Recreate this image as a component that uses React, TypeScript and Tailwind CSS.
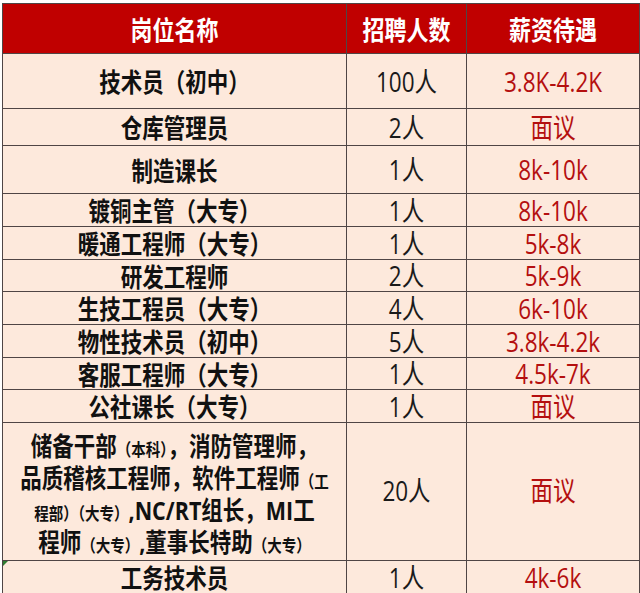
import React from "react";

const FONT = { fontFamily: '"Open Sans","Noto Sans CJK SC",sans-serif' };

type Row = { name: React.ReactNode; count: string; pay: string; h: string };

const rows: Row[] = [
  { name: "技术员（初中）", count: "100人", pay: "3.8K-4.2K", h: "h-[55px]" },
  { name: "仓库管理员", count: "2人", pay: "面议", h: "h-[37px]" },
  { name: "制造课长", count: "1人", pay: "8k-10k", h: "h-[48px]" },
  { name: "镀铜主管（大专）", count: "1人", pay: "8k-10k", h: "h-[33px]" },
  { name: "暖通工程师（大专）", count: "1人", pay: "5k-8k", h: "h-[33px]" },
  { name: "研发工程师", count: "2人", pay: "5k-9k", h: "h-[32px]" },
  { name: "生技工程员（大专）", count: "4人", pay: "6k-10k", h: "h-[33px]" },
  { name: "物性技术员（初中）", count: "5人", pay: "3.8k-4.2k", h: "h-[33px]" },
  { name: "客服工程师（大专）", count: "1人", pay: "4.5k-7k", h: "h-[32px]" },
  { name: "公社课长（大专）", count: "1人", pay: "面议", h: "h-[33px]" },
];

const S = ({ children }: { children: React.ReactNode }) => (
  <span className="text-[14.5px] leading-none">{children}</span>
);

const T = ({ children }: { children: React.ReactNode }) => (
  <span className="inline-block scale-y-[1.2] whitespace-nowrap">{children}</span>
);

function Cells({ name, count, pay, h, extra }: { name: React.ReactNode; count: string; pay: string; h: string; extra?: React.ReactNode }) {
  return (
    <div className={`flex ${h}`}>
      <div className="relative w-[344px] border-r border-b border-[#4f4545] flex items-center justify-center text-[21.5px] font-bold text-[#111] leading-none pt-[2px]">
        {extra}
        <T>{name}</T>
      </div>
      <div className="w-[120px] border-r border-b border-[#4f4545] flex items-center justify-center text-[22.5px] text-[#1a1a1a] leading-none pt-[2px]">
        <T>{count}</T>
      </div>
      <div className="w-[173px] border-r border-b border-[#4f4545] flex items-center justify-center text-[22.5px] text-[#b40f0f] leading-none pt-[2px]">
        <T>{pay}</T>
      </div>
    </div>
  );
}

export default function App() {
  return (
    <div className="w-[640px] h-[593px] bg-white overflow-hidden pt-[3px] pl-[2px]" style={FONT}>
      <div className="w-[638px] border-l border-t border-[#4f4545] bg-[#fde9dc]">
        <div className="flex h-[50px] bg-[#c00000] text-white font-bold text-[22px] leading-none">
          <div className="w-[344px] border-r border-b border-[#4f4545] flex items-center justify-center"><T>岗位名称</T></div>
          <div className="w-[120px] border-r border-b border-[#4f4545] flex items-center justify-center"><T>招聘人数</T></div>
          <div className="w-[173px] border-r border-b border-[#4f4545] flex items-center justify-center"><T>薪资待遇</T></div>
        </div>
        {rows.map((r, i) => (
          <Cells key={i} {...r} />
        ))}
        <div className="flex h-[138px]">
          <div className="w-[344px] border-r border-b border-[#4f4545] flex items-center justify-center text-center text-[21.5px] font-bold text-[#111] leading-[32px] pt-[4px]">
            <div>
              <div className="h-[32px] flex items-center justify-center"><T>储备干部<S>（本科）</S>，消防管理师，</T></div>
              <div className="h-[32px] flex items-center justify-center"><T>品质稽核工程师，软件工程师<S>（工</S></T></div>
              <div className="h-[32px] flex items-center justify-center"><T><S>程部）（大专）</S>,NC/RT组长，MI工</T></div>
              <div className="h-[32px] flex items-center justify-center"><T>程师<S>（大专）</S>,董事长特助<S>（大专）</S></T></div>
            </div>
          </div>
          <div className="w-[120px] border-r border-b border-[#4f4545] flex items-center justify-center text-[22.5px] text-[#1a1a1a] leading-none">
            <T>20人</T>
          </div>
          <div className="w-[173px] border-r border-b border-[#4f4545] flex items-center justify-center text-[22.5px] text-[#b40f0f] leading-none">
            <T>面议</T>
          </div>
        </div>
        <Cells
          name="工务技术员"
          count="1人"
          pay="4k-6k"
          h="h-[33px]"
          extra={
            <span className="absolute left-0 top-0 w-0 h-0 border-t-[5px] border-r-[5px] border-t-[#2e7d32] border-r-transparent" />
          }
        />
      </div>
    </div>
  );
}
